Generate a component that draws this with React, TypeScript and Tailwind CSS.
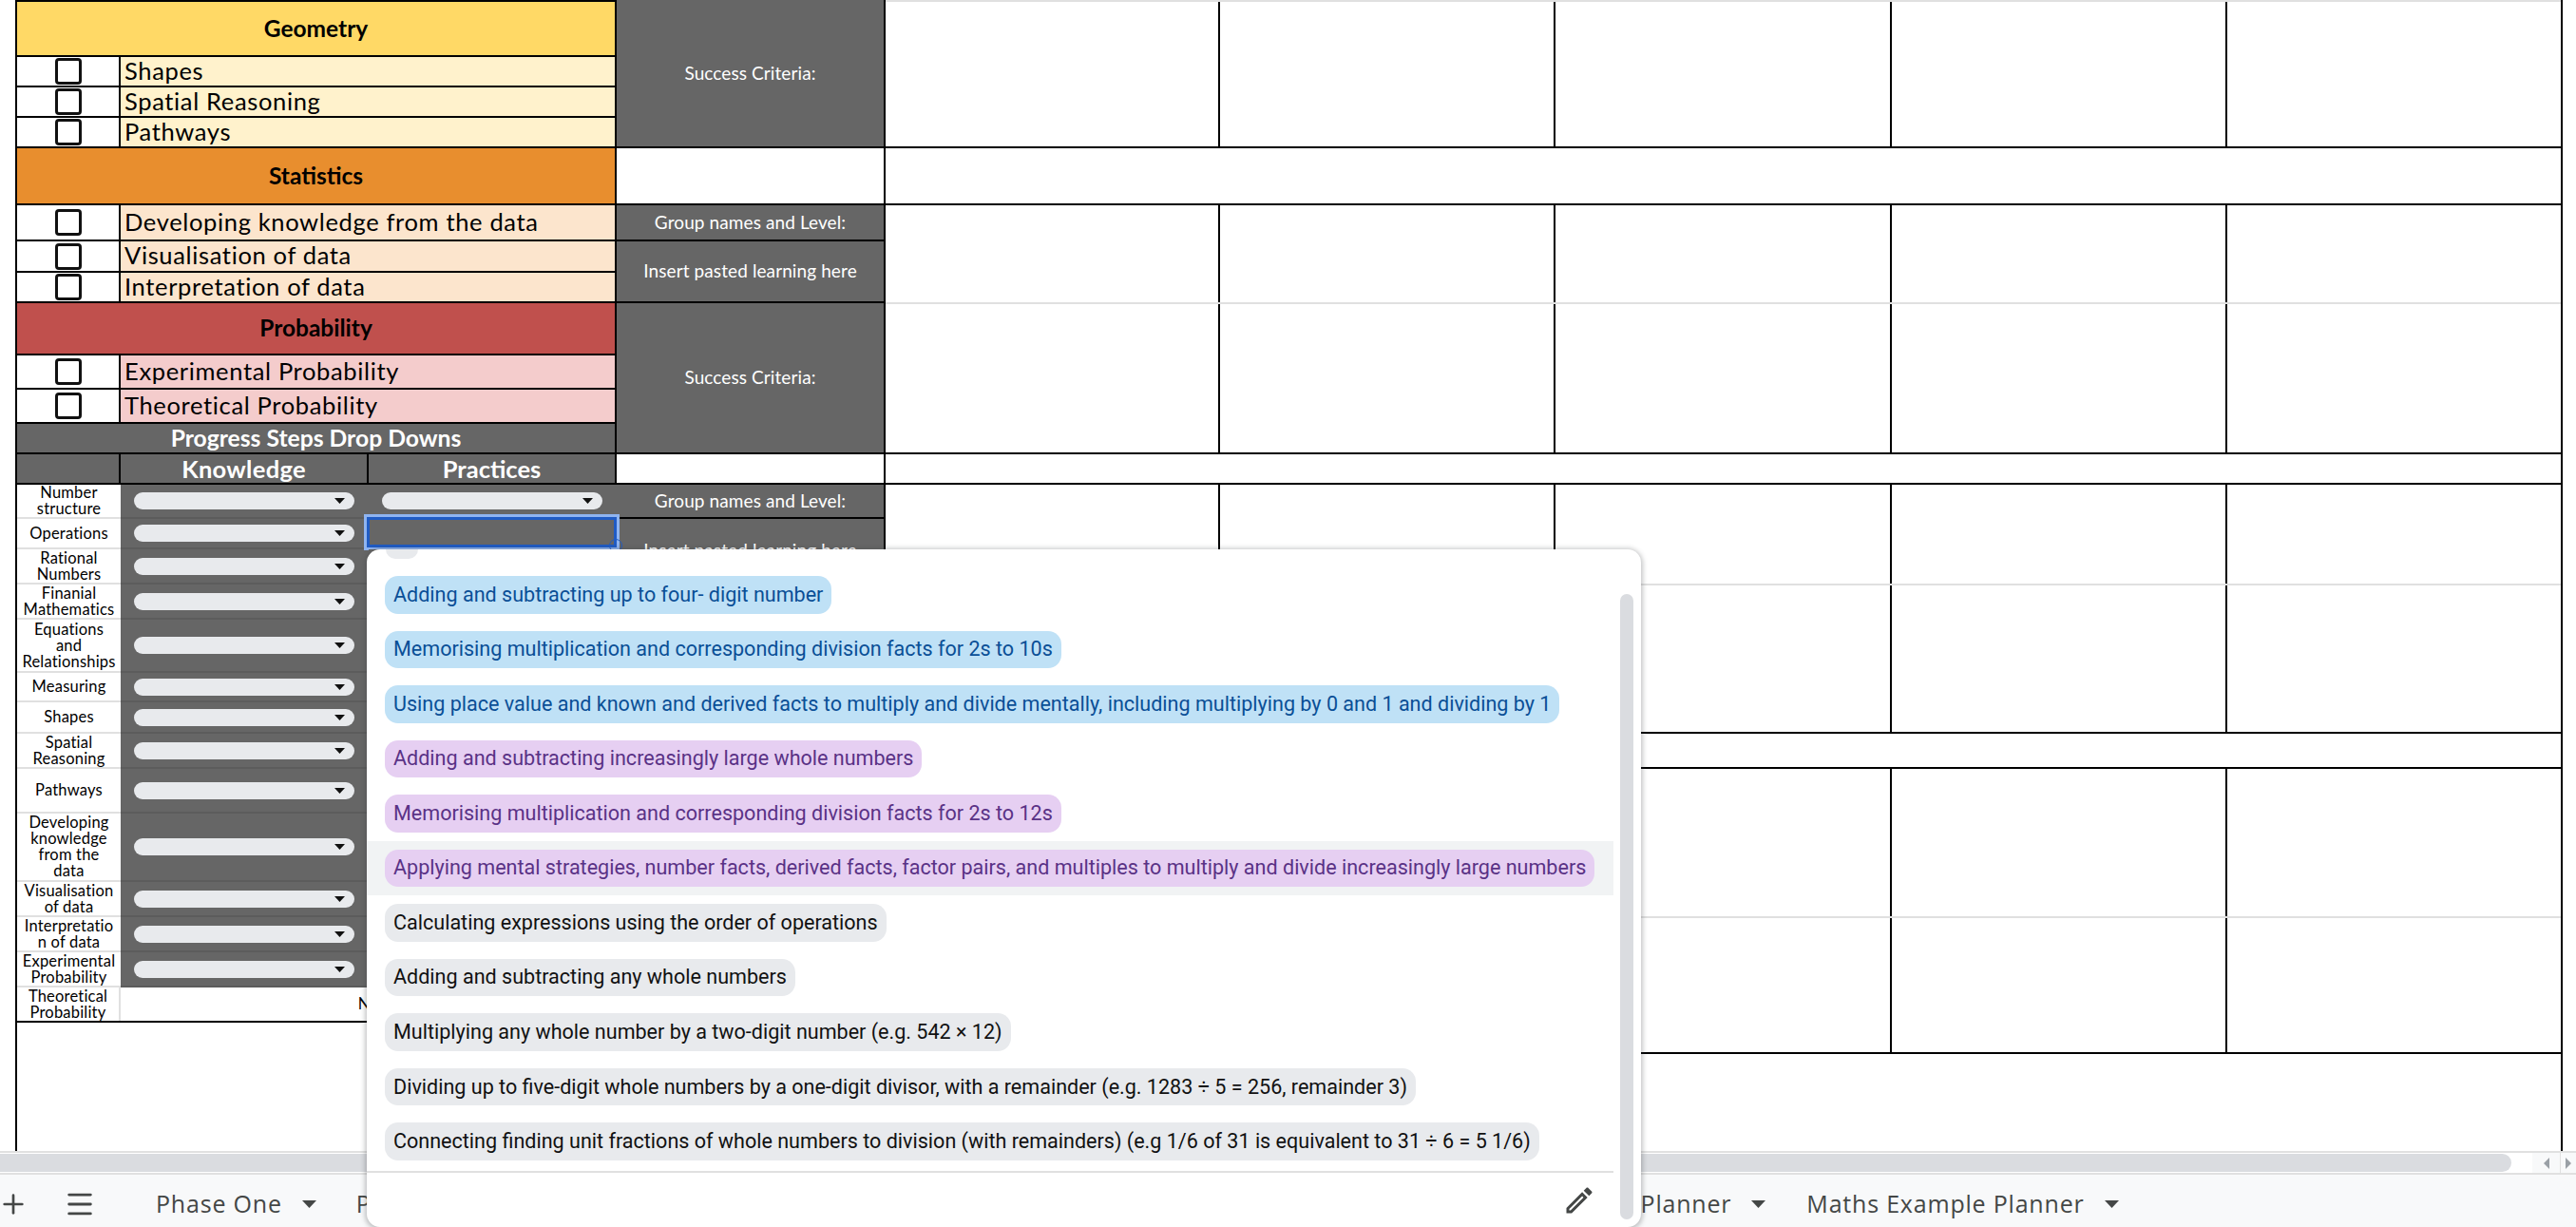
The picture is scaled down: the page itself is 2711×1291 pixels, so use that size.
import { Menu, Plus } from "lucide-react";

const gothic = "font-['Lato',sans-serif]";

type Topic = { label: string; h: string };

const Checkbox = () => (
  <div className="flex w-[109px] shrink-0 items-center justify-center self-stretch border-r-2 border-black bg-white">
    <div className="h-[28px] w-[28px] shrink-0 rounded-[4px] border-[3px] border-[#111]" />
  </div>
);

const SectionHead = ({ title, h, bg }: { title: string; h: string; bg: string }) => (
  <div className={`flex items-center justify-center border-b-2 border-black ${h} ${bg}`}>
    <span className="text-[24.5px] font-bold text-black">{title}</span>
  </div>
);

const TopicRows = ({ topics, bg }: { topics: Topic[]; bg: string }) => (
  <>
    {topics.map((t) => (
      <div key={t.label} className={`flex items-stretch overflow-visible border-b-2 border-black ${t.h}`}>
        <Checkbox />
        <div className={`flex flex-1 items-center pb-[2px] pl-[4px] text-[25.5px] tracking-[0.65px] text-black ${bg}`}>
          {t.label}
        </div>
      </div>
    ))}
  </>
);

const Dropdown = () => (
  <div className="flex h-[18px] w-[232px] items-center justify-end rounded-full bg-[#e8eaed] pr-[10px]">
    <svg width="11" height="6" viewBox="0 0 11 6">
      <path d="M0 0h11L5.5 6z" fill="#111" />
    </svg>
  </div>
);

const progressRows = [
  { label: "Number\nstructure", h: "h-[36px]", practice: true },
  { label: "Operations", h: "h-[32px]", selected: true },
  { label: "Rational\nNumbers", h: "h-[37px]" },
  { label: "Finanial\nMathematics", h: "h-[37px]" },
  { label: "Equations\nand\nRelationships", h: "h-[56px]" },
  { label: "Measuring", h: "h-[31px]" },
  { label: "Shapes", h: "h-[33px]" },
  { label: "Spatial\nReasoning", h: "h-[37px]" },
  { label: "Pathways", h: "h-[47px]" },
  { label: "Developing\nknowledge\nfrom the\ndata", h: "h-[72px]" },
  { label: "Visualisation\nof data", h: "h-[37px]" },
  { label: "Interpretatio\nn of data", h: "h-[37px]" },
  { label: "Experimental\nProbability", h: "h-[37px]" },
];

const ProgressRow = ({ row }: { row: (typeof progressRows)[number] }) => (
  <div className={`flex ${row.h}`}>
    <div className="flex w-[109px] shrink-0 items-center justify-center whitespace-pre-line border-b-2 border-[#e0e0e0] bg-white text-center text-[16.5px] leading-[17px] tracking-[0.2px] text-black">
      {row.label}
    </div>
    <div className="flex w-[261px] shrink-0 items-center justify-start border-b-2 border-[#5c5c5c] bg-[#666666] pl-[14px]">
      <Dropdown />
    </div>
    <div className="relative flex flex-1 items-center border-b-2 border-[#5c5c5c] bg-[#666666] pl-[14px]">
      {row.practice && <Dropdown />}
      {row.selected && (
        <div className="absolute -left-[2px] -top-[2px] bottom-0 right-0 border-[3px] border-[#1f5bc4] ring-[3px] ring-[#8fb4f0]">
          <div className="absolute -bottom-[8px] -right-[9px] h-[14px] w-[14px] rounded-full border border-[#1f5bc4]" />
        </div>
      )}
    </div>
  </div>
);

const LeftTable = () => (
  <div className="flex w-[631px] shrink-0 flex-col">
    <div className="border-r-2 border-t-2 border-black">
      <SectionHead title="Geometry" h="h-[58px]" bg="bg-[#ffd966]" />
      <TopicRows
        bg="bg-[#fff2cc]"
        topics={[
          { label: "Shapes", h: "h-[32px]" },
          { label: "Spatial Reasoning", h: "h-[32px]" },
          { label: "Pathways", h: "h-[32px]" },
        ]}
      />
      <SectionHead title="Statistics" h="h-[60px]" bg="bg-[#e88e2e]" />
      <TopicRows
        bg="bg-[#fce5cd]"
        topics={[
          { label: "Developing knowledge from the data", h: "h-[38px]" },
          { label: "Visualisation of data", h: "h-[33px]" },
          { label: "Interpretation of data", h: "h-[32px]" },
        ]}
      />
      <SectionHead title="Probability" h="h-[55px]" bg="bg-[#c0504d]" />
      <TopicRows
        bg="bg-[#f4cccc]"
        topics={[
          { label: "Experimental Probability", h: "h-[36px]" },
          { label: "Theoretical Probability", h: "h-[36px]" },
        ]}
      />
      <div className="flex h-[32px] items-center justify-center border-b-2 border-black bg-[#666666] text-[24.7px] font-bold text-white">
        Progress Steps Drop Downs
      </div>
      <div className="flex h-[32px] border-b-2 border-black bg-[#666666] text-[25.5px] font-bold text-white">
        <div className="w-[109px] shrink-0 border-r-2 border-black" />
        <div className="flex w-[261px] shrink-0 items-center justify-center border-r-2 border-black tracking-[0.3px]">Knowledge</div>
        <div className="flex flex-1 items-center justify-center">Practices</div>
      </div>
    </div>
    {progressRows.map((row) => (
      <ProgressRow key={row.label} row={row} />
    ))}
    <div className="flex h-[37px] border-b-2 border-black">
      <div className="flex w-[109px] shrink-0 items-center justify-center whitespace-pre-line border-r-2 border-[#e0e0e0] bg-white text-center text-[16.5px] leading-[17px] tracking-[0.2px] text-black">
        {"Theoretical\nProbability"}
      </div>
      <div className="flex flex-1 items-center justify-center bg-white pl-[8px] text-[16.5px] text-black">N/A</div>
    </div>
  </div>
);

const GreyCell = ({ text, h }: { text?: string; h: string }) => (
  <div className={`flex items-center justify-center border-b-2 border-black bg-[#666666] text-[19px] tracking-[0.1px] text-white ${h}`}>
    {text}
  </div>
);

const GreyColumn = () => (
  <div className="flex w-[283px] shrink-0 flex-col border-r-2 border-black">
    <GreyCell text="Success Criteria:" h="h-[156px]" />
    <div className="h-[60px] border-b-2 border-black bg-white" />
    <GreyCell text="Group names and Level:" h="h-[38px]" />
    <GreyCell text="Insert pasted learning here" h="h-[65px]" />
    <GreyCell text="Success Criteria:" h="h-[159px]" />
    <div className="h-[32px] border-b-2 border-black bg-white" />
    <GreyCell text="Group names and Level:" h="h-[36px]" />
    <GreyCell text="Insert pasted learning here" h="h-[69px]" />
  </div>
);

const CellRow = ({ h, mid }: { h: string; mid?: string }) => (
  <div className={`relative flex border-b-2 border-black ${h}`}>
    <div className="w-[352px] border-r-2 border-black" />
    <div className="w-[353px] border-r-2 border-black" />
    <div className="w-[354px] border-r-2 border-black" />
    <div className="w-[353px] border-r-2 border-black" />
    <div className="flex-1" />
    {mid && <div className={`absolute inset-x-0 h-[2px] bg-[#e0e0e0] ${mid}`} />}
  </div>
);

const RightCells = () => (
  <div className="flex flex-1 flex-col">
    <div className="h-[2px] bg-[#e0e0e0]" />
    <CellRow h="h-[154px]" />
    <div className="h-[60px] border-b-2 border-black" />
    <CellRow h="h-[262px]" mid="top-[102px]" />
    <div className="h-[32px] border-b-2 border-black" />
    <CellRow h="h-[262px]" mid="top-[104px]" />
    <div className="h-[37px] border-b-2 border-black" />
    <CellRow h="h-[300px]" mid="top-[155px]" />
  </div>
);

const chips = [
  { text: "Adding and subtracting up to four- digit number", tone: "blue" },
  { text: "Memorising multiplication and corresponding division facts for 2s to 10s", tone: "blue" },
  { text: "Using place value and known and derived facts to multiply and divide mentally, including multiplying by 0 and 1 and dividing by 1", tone: "blue" },
  { text: "Adding and subtracting increasingly large whole numbers", tone: "purple" },
  { text: "Memorising multiplication and corresponding division facts for 2s to 12s", tone: "purple" },
  { text: "Applying mental strategies, number facts, derived facts, factor pairs, and multiples to multiply and divide increasingly large numbers", tone: "purple", hover: true },
  { text: "Calculating expressions using the order of operations", tone: "grey" },
  { text: "Adding and subtracting any whole numbers", tone: "grey" },
  { text: "Multiplying any whole number by a two-digit number (e.g. 542 × 12)", tone: "grey" },
  { text: "Dividing up to five-digit whole numbers by a one-digit divisor, with a remainder (e.g. 1283 ÷ 5 = 256, remainder 3)", tone: "grey" },
  { text: "Connecting finding unit fractions of whole numbers to division (with remainders) (e.g 1/6 of 31 is equivalent to 31 ÷ 6 = 5 1/6)", tone: "grey" },
];

const toneClass: Record<string, string> = {
  blue: "bg-[#bfe1f6] text-[#0a4f96]",
  purple: "bg-[#e6cff2] text-[#5a3286]",
  grey: "bg-[#e8eaed] text-[#111111]",
};

const Popup = () => (
  <div className="absolute left-[386px] top-[578px] h-[713px] w-[1341px] overflow-hidden rounded-[14px] bg-white font-['Roboto',sans-serif] shadow-[0_1px_5px_2px_rgba(60,64,67,0.3)]">
    <div className="ml-[20px] h-[10px] w-[34px] rounded-b-full bg-[#e8eaed]" />
    <div className="mt-[9px] flex h-[635px] w-[1312px] flex-col">
      {chips.map((c) => (
        <div key={c.text} className={`flex h-[57.55px] shrink-0 items-center pl-[19px] ${c.hover ? "bg-[#f1f3f4]" : ""}`}>
          <span className={`flex h-[39.5px] items-center rounded-[14px] px-[9px] text-[21.55px] whitespace-nowrap ${toneClass[c.tone]}`}>
            {c.text}
          </span>
        </div>
      ))}
    </div>
    <div className="flex h-[59px] w-[1312px] items-center justify-end border-t-2 border-[#e0e0e0] pr-[18px]">
      <svg width="36" height="36" viewBox="0 0 24 24" fill="#444746">
        <path d="M3 17.25V21h3.75L17.81 9.94l-3.75-3.75L3 17.25zM5.92 19H5v-.92l9.06-9.06.92.92L5.92 19zM20.71 5.63l-2.34-2.34c-.2-.2-.45-.29-.71-.29s-.51.1-.7.29l-1.83 1.83 3.75 3.75 1.83-1.83c.39-.39.39-1.02 0-1.41z" />
      </svg>
    </div>
    <div className="absolute bottom-[8px] right-[8px] top-[47px] w-[14px] rounded-full bg-[#dadce0]" />
  </div>
);

const Caret = () => (
  <svg width="15" height="8" viewBox="0 0 15 8" className="shrink-0">
    <path d="M0 0h15L7.5 8z" fill="#444746" />
  </svg>
);

const TabBar = () => (
  <div className="flex h-[57px] items-center border-t-2 border-[#e0e0e0] bg-[#f8f9fa] pt-[6px] font-['Open_Sans',sans-serif] text-[25px] tracking-[0.8px] text-[#444746]">
    <Plus className="-ml-[2px] h-[32px] w-[32px] shrink-0" strokeWidth={2} />
    <Menu className="ml-[37px] h-[34px] w-[34px] shrink-0" strokeWidth={2} />
    <span className="ml-[63px]">Phase One</span>
    <span className="ml-[21px]"><Caret /></span>
    <span className="ml-[42px]">P</span>
    <span className="ml-[1336px]">Planner</span>
    <span className="ml-[21px]"><Caret /></span>
    <span className="ml-[43px]">Maths Example Planner</span>
    <span className="ml-[21px]"><Caret /></span>
  </div>
);

const ScrollStrip = () => (
  <div className="flex h-[23px] items-stretch border-t-2 border-[#e0e0e0] bg-white">
    <div className="my-[1px] w-[2643px] rounded-r-full bg-[#dadce0]" />
    <div className="ml-[22px] flex flex-1 bg-[#f8f9fa]">
      <div className="flex w-[30px] items-center justify-center border-r border-[#e0e0e0]">
        <svg width="6" height="12" viewBox="0 0 6 12"><path d="M6 0v12L0 6z" fill="#9aa0a6" /></svg>
      </div>
      <div className="flex flex-1 items-center justify-center">
        <svg width="6" height="12" viewBox="0 0 6 12"><path d="M0 0v12l6-6z" fill="#9aa0a6" /></svg>
      </div>
    </div>
  </div>
);

export default function App() {
  return (
    <div className={`relative h-[1291px] w-[2711px] overflow-hidden bg-white ${gothic}`}>
      <div className="ml-[16px] mr-[14px] flex h-[1211px] border-x-2 border-black">
        <LeftTable />
        <GreyColumn />
        <RightCells />
      </div>
      <ScrollStrip />
      <TabBar />
      <Popup />
    </div>
  );
}
